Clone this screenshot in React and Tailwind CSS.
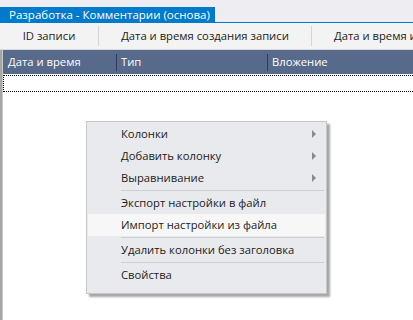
import React from "react";

const Arrow = () => (
    <svg width="5" height="8" viewBox="0 0 5 8" className="absolute right-[8px] top-[7px]">
        <path d="M0 0 L4 4 L0 8 Z" fill="#8a8a8a" />
    </svg>
);

const MenuItem = ({ label, sub, active }) => (
    <div className={"relative h-[22px] flex items-center pl-[33px] mx-[1px] " + (active ? "bg-[#f7f7f8]" : "")}>
        <span>{label}</span>
        {sub ? <Arrow /> : null}
    </div>
);

const Sep = () => <div className="h-px bg-[#cfd0d6] ml-[34px] mr-[2px] my-[1px]" />;

const App = () => {
    return (
        <div
            className="relative w-[413px] h-[320px] overflow-hidden bg-white text-[11.25px] text-[#1b1b1b]"
            style={{ fontFamily: '"Open Sans", "Noto Sans", sans-serif' }}
        >
            <div className="h-[7px] bg-[#eeeef2]" />
            <div className="h-[15px] bg-[#eeeef2] flex">
                <div className="w-[215px] shrink-0 bg-[#007acc] text-white pl-[9px] leading-[15px] whitespace-nowrap text-[11.5px]">
                    Разработка - Комментарии (основа)
                </div>
            </div>
            <div className="h-px bg-[#007acc]" />

            <div className="h-[27px] bg-[#f3f3f3] flex items-center whitespace-nowrap border-b border-[#d9d9d9]">
                <div className="w-[98px] shrink-0 text-center">ID записи</div>
                <div className="w-px shrink-0 h-[20px] bg-[#d4d4d4]" />
                <div className="w-[212px] shrink-0 text-center">Дата и время создания записи</div>
                <div className="w-px shrink-0 h-[20px] bg-[#d4d4d4]" />
                <div className="shrink-0 pl-[22px]">Дата и время изменения</div>
            </div>

            <div className="flex h-[271px]">
                <div className="w-[3px] shrink-0 bg-[#a6a6a6] border-r border-[#c8c8c8]" />
                <div className="flex-1 flex flex-col">
                    <div className="h-[24px] bg-[#586a8b] text-white flex items-center whitespace-nowrap">
                        <div className="w-[113px] shrink-0 pl-[5px]">Дата и время</div>
                        <div className="w-px shrink-0 h-[17px] bg-[#2f3d58]" />
                        <div className="w-[150px] shrink-0 pl-[4px]">Тип</div>
                        <div className="w-px shrink-0 h-[17px] bg-[#2f3d58]" />
                        <div className="pl-[4px]">Вложение</div>
                    </div>
                    <div className="h-[17px] border border-dotted border-black border-r-0 mt-px" />
                </div>
            </div>

            <div className="absolute left-[86px] top-[121px] w-[241px] pt-[1px] pb-[7px] bg-[#e9eaee] border border-[#c5c6cb] shadow-[3px_3px_2px_rgba(0,0,0,0.35)]">
                <MenuItem label="Колонки" sub />
                <MenuItem label="Добавить колонку" sub />
                <MenuItem label="Выравнивание" sub />
                <Sep />
                <MenuItem label="Экспорт настройки в файл" />
                <MenuItem label="Импорт настройки из файла" active />
                <Sep />
                <MenuItem label="Удалить колонки без заголовка" />
                <Sep />
                <MenuItem label="Свойства" />
            </div>
        </div>
    );
};

export default App;
